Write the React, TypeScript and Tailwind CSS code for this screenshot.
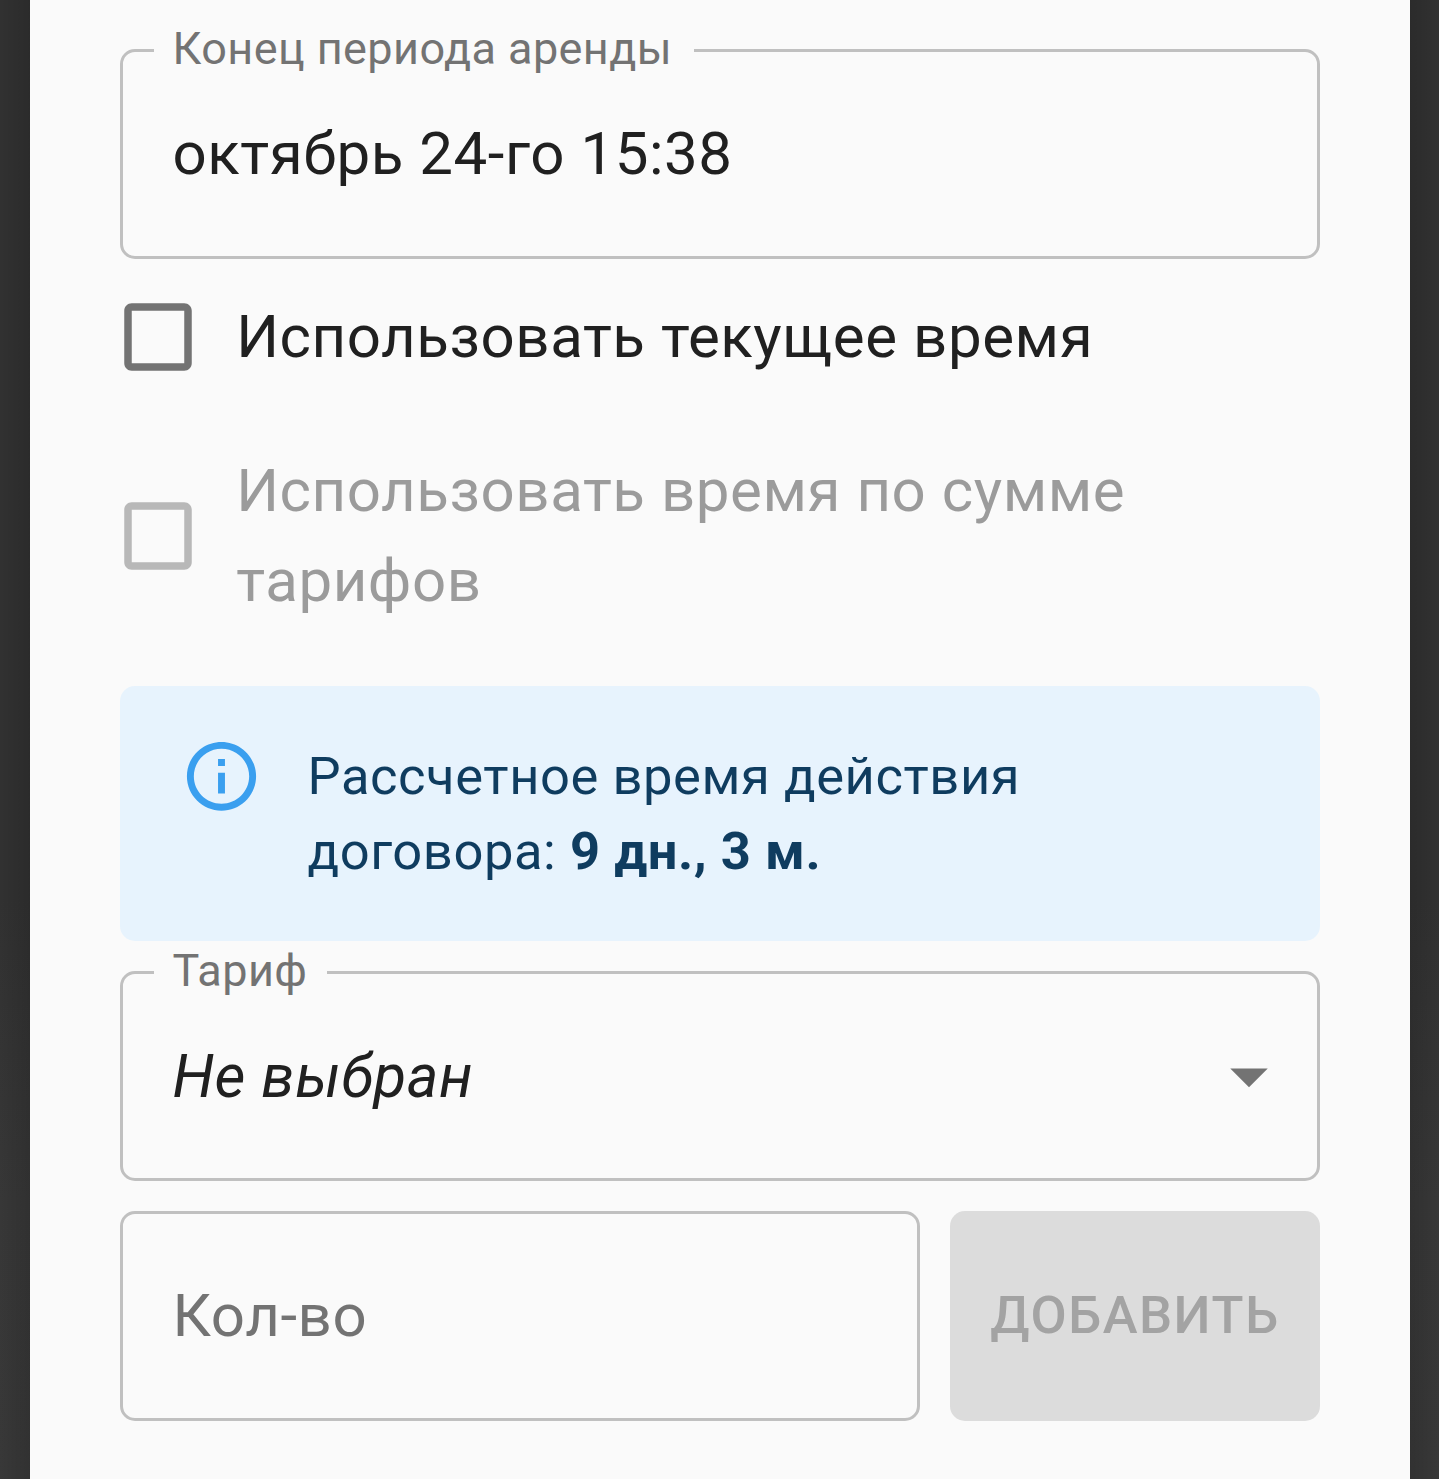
import type { ReactNode } from 'react';

function OutlinedField({ label, notch, className, children }: { label?: string; notch?: string; className?: string; children: ReactNode }) {
  return (
    <div className={`relative flex h-[210px] items-center rounded-[15px] border-[3px] border-[#c0c0c0] px-[49.5px] ${className ?? ''}`}>
      {label && (
        <span
          className={`absolute top-[-30px] left-[31px] h-[60px] bg-[#fafafa] pl-[18.5px] text-[45px] leading-[54px] tracking-[0.00938em] whitespace-nowrap text-[#737373] ${notch ?? ''}`}
        >
          {label}
        </span>
      )}
      {children}
    </div>
  );
}

function CheckRow({ text, disabled, className }: { text: string; disabled?: boolean; className?: string }) {
  return (
    <label className={`-ml-[7.5px] flex items-center gap-[33.75px] ${disabled ? 'text-[#9b9b9b]' : 'text-[#202020]'} ${className ?? ''}`}>
      <svg viewBox="0 0 24 24" className={`size-[90px] shrink-0 ${disabled ? 'fill-[#b8b8b8]' : 'fill-[#737373]'}`}>
        <path d="M19 5v14H5V5h14m0-2H5c-1.1 0-2 .9-2 2v14c0 1.1.9 2 2 2h14c1.1 0 2-.9 2-2V5c0-1.1-.9-2-2-2z" />
      </svg>
      <span className="text-[60px] leading-[90px] tracking-[0.00938em]">{text}</span>
    </label>
  );
}

export default function App() {
  return (
    <div className="flex h-[1479px] w-[1439px] overflow-hidden bg-[#2e2e2e] font-['Roboto',sans-serif]">
      <div className="w-[30px] shrink-0 bg-[linear-gradient(to_right,transparent,rgba(0,0,0,0.12)),linear-gradient(to_bottom,#313131_0,#313131_900px,#373737_1200px,#383838_1479px)]" />
      <main className="flex w-[1380px] shrink-0 flex-col bg-[#fafafa] px-[90px] pt-[49px]">
        <OutlinedField label="Конец периода аренды" notch="w-[540px]">
          <span className="text-[60px] leading-[86px] tracking-[0.00938em] text-[#202020]">октябрь 24-го 15:38</span>
        </OutlinedField>
        <CheckRow text="Использовать текущее время" className="mt-[33px]" />
        <CheckRow text="Использовать время по сумме тарифов" disabled className="mt-[64px]" />
        <div className="mt-[60px] flex h-[255px] rounded-[15px] bg-[#e7f3fd] px-[60px] py-[22.5px]">
          <svg viewBox="0 0 24 24" preserveAspectRatio="none" className="mt-[26.25px] mr-[44.5px] h-[82.5px] w-[83px] shrink-0 fill-[#3a9fef]">
            <path d="M11 7h2v2h-2zM11 11h2v6h-2zM12 2C6.48 2 2 6.48 2 12s4.48 10 10 10 10-4.48 10-10S17.52 2 12 2zm0 18c-4.41 0-8-3.59-8-8s3.59-8 8-8 8 3.59 8 8-3.59 8-8 8z" />
          </svg>
          <p className="w-[780px] pt-[30px] text-[52.5px] leading-[75px] tracking-[0.01071em] text-[#0f3c5f]">
            Рассчетное время действия договора: <strong className="font-bold">9 дн., 3 м.</strong>
          </p>
        </div>
        <OutlinedField label="Тариф" notch="w-[173px]" className="mt-[30px] justify-between pr-[23px]">
          <em className="pt-[2px] text-[60px] leading-[86px] tracking-[0.00938em] text-[#202020]">Не выбран</em>
          <svg viewBox="0 0 24 24" className="size-[90px] fill-[#737373]">
            <path d="M7 10l5 5 5-5z" />
          </svg>
        </OutlinedField>
        <div className="mt-[30px] flex gap-[30px]">
          <OutlinedField className="w-[800px]">
            <span className="text-[60px] leading-[86px] tracking-[0.00938em] text-[#737373]">Кол-во</span>
          </OutlinedField>
          <button className="h-[210px] w-[370px] rounded-[15px] bg-[#dcdcdc] pb-[2px] text-[52.5px] leading-[92px] font-medium tracking-[0.02857em] text-[#a3a3a3]">
            ДОБАВИТЬ
          </button>
        </div>
      </main>
      <div className="w-[29px] shrink-0 bg-[linear-gradient(to_left,transparent,rgba(0,0,0,0.12)),linear-gradient(to_bottom,#313131_0,#313131_900px,#373737_1200px,#383838_1479px)]" />
    </div>
  );
}
